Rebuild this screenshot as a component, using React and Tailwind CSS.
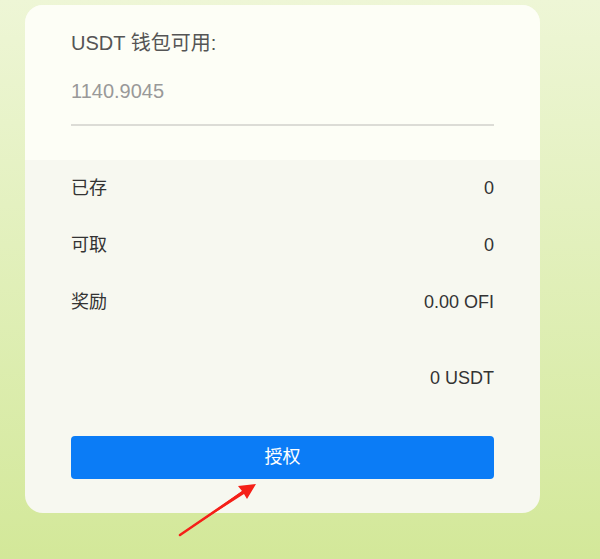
export default function App() {
  const rows = [
    { label: '已存', value: '0' },
    { label: '可取', value: '0' },
    { label: '奖励', value: '0.00 OFI' },
  ];

  return (
    <div
      className="relative w-[600px] h-[559px] overflow-hidden bg-gradient-to-b from-[#eef6d6] to-[#d3e899] pt-[5px] pl-[25px]"
      style={{ fontFamily: '"Liberation Sans", Arial, "Noto Sans CJK SC", sans-serif' }}
    >
      <div className="w-[515px] h-[508px] rounded-[18px] bg-[#f7f8f0] overflow-hidden flex flex-col">
        {/* wallet */}
        <div className="bg-[#fdfef6] px-[46px] pt-[26px] h-[155px]">
          <div className="text-[20px] leading-[24px] text-[#555]">USDT 钱包可用:</div>
          <div className="mt-[24px] text-[20px] leading-[24px] text-[#999]">1140.9045</div>
          <div className="mt-[21px] h-[2px] bg-[#dcdcd6]"></div>
        </div>

        {/* stats */}
        <div className="px-[46px] pt-[16px] flex flex-col">
          {rows.map((r) => (
            <div key={r.label} className="flex justify-between items-center h-[24px] mb-[33px] text-[18px] text-[#333]">
              <span>{r.label}</span>
              <span>{r.value}</span>
            </div>
          ))}
          <div className="flex justify-end items-center h-[24px] mt-[19px] text-[18px] text-[#333]">0 USDT</div>
          <button className="mt-[46px] h-[43px] w-full rounded-[4px] bg-[#0b7cf6] text-white text-[18px]">
            授权
          </button>
        </div>
      </div>

      {/* annotation arrow */}
      <svg className="absolute left-0 top-0 pointer-events-none" width="600" height="559">
        <path d="M180 535 L242 491 L238 486 L256 484 L247 499 L244 494 Z" fill="#f52018" />
        <path d="M180 535 L246 490" stroke="#f52018" strokeWidth="2.5" strokeLinecap="round" />
      </svg>
    </div>
  );
}
